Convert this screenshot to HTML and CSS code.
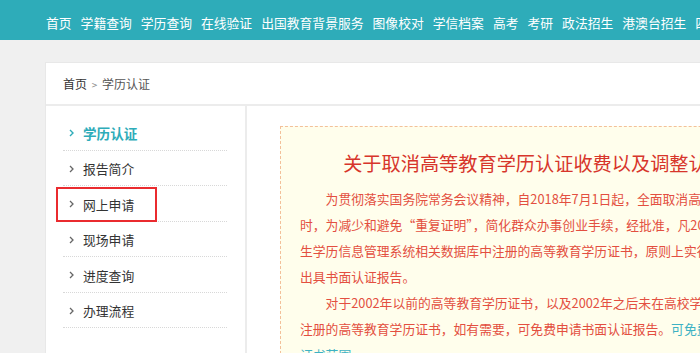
FILE: index.html
```html
<!DOCTYPE html>
<html lang="zh-CN">
<head>
  <meta charset="UTF-8">
  <meta name="viewport" content="width=device-width, initial-scale=1.0">
  <title>学历认证</title>
  <link rel="stylesheet" href="styles.css">
</head>
<body>

  <div class="topnav">
    <ul class="nav-list">
      <li><a href="#">首页</a></li>
      <li><a href="#">学籍查询</a></li>
      <li><a href="#">学历查询</a></li>
      <li><a href="#">在线验证</a></li>
      <li><a href="#">出国教育背景服务</a></li>
      <li><a href="#">图像校对</a></li>
      <li><a href="#">学信档案</a></li>
      <li><a href="#">高考</a></li>
      <li><a href="#">考研</a></li>
      <li><a href="#">政法招生</a></li>
      <li><a href="#">港澳台招生</a></li>
      <li><a href="#">四六级</a></li>
    </ul>
  </div>

  <div class="page">
    <div class="panel">
      <div class="crumb">
        <a href="#">首页</a> <span class="crumb-sep">&gt;</span> 学历认证
      </div>

      <div class="panel-body">
        <ul class="side-menu">
          <li class="active">
            <svg class="arrow" width="5" height="8" viewBox="0 0 5 8"><polyline points="1,1 4,4 1,7" fill="none" stroke="currentColor" stroke-width="1.4"/></svg>
            <a href="#">学历认证</a>
          </li>
          <li>
            <svg class="arrow" width="5" height="8" viewBox="0 0 5 8"><polyline points="1,1 4,4 1,7" fill="none" stroke="currentColor" stroke-width="1.3"/></svg>
            <a href="#">报告简介</a>
          </li>
          <li>
            <span class="mark"></span>
            <svg class="arrow" width="5" height="8" viewBox="0 0 5 8"><polyline points="1,1 4,4 1,7" fill="none" stroke="currentColor" stroke-width="1.3"/></svg>
            <a href="#">网上申请</a>
          </li>
          <li>
            <svg class="arrow" width="5" height="8" viewBox="0 0 5 8"><polyline points="1,1 4,4 1,7" fill="none" stroke="currentColor" stroke-width="1.3"/></svg>
            <a href="#">现场申请</a>
          </li>
          <li>
            <svg class="arrow" width="5" height="8" viewBox="0 0 5 8"><polyline points="1,1 4,4 1,7" fill="none" stroke="currentColor" stroke-width="1.3"/></svg>
            <a href="#">进度查询</a>
          </li>
          <li>
            <svg class="arrow" width="5" height="8" viewBox="0 0 5 8"><polyline points="1,1 4,4 1,7" fill="none" stroke="currentColor" stroke-width="1.3"/></svg>
            <a href="#">办理流程</a>
          </li>
        </ul>

        <div class="main">
          <div class="notice">
            <h2 class="notice-title">关于取消高等教育学历认证收费以及调整认证服务的公告</h2>
            <p>为贯彻落实国务院常务会议精神，自2018年7月1日起，全面取消高等教育学历认证收费。同<br>时，为减少和避免“重复证明”，简化群众办事创业手续，经批准，凡2001年以来在高等学<br>生学历信息管理系统相关数据库中注册的高等教育学历证书，原则上实行网上查询认证，不再<br>出具书面认证报告。</p>
            <p>对于2002年以前的高等教育学历证书，以及2002年之后未在高校学生学历信息管理系统中<br>注册的高等教育学历证书，如有需要，可免费申请书面认证报告。<a href="#">可免费申请书面认证报告的<br>证书范围</a></p>
          </div>
        </div>
      </div>
    </div>
  </div>

</body>
</html>
```

FILE: styles.css
```css
html {
  overflow: hidden;
}

body {
  font-family: "Microsoft YaHei", "Noto Sans CJK SC", sans-serif;
  margin: 0;
  padding: 0;
  background-color: #f0f0f0;
  color: #333;
  width: 1000px;
}

a {
  color: inherit;
  text-decoration: none;
}

ul {
  list-style: none;
  margin: 0;
  padding: 0;
}

/* top navigation */
.topnav {
  height: 40px;
  background-color: #2eacb9;
}

.nav-list {
  display: flex;
  gap: 9px;
  padding-left: 46px;
  padding-top: 2px;
  height: 38px;
  align-items: center;
  white-space: nowrap;
}

.nav-list a {
  color: #fff;
  font-size: 12.8px;
}

/* main panel */
.page {
  padding: 22px 0 0 45px;
}

.panel {
  width: 872px;
  background-color: #fff;
  border: 1px solid #e8e8e8;
  border-right: none;
}

.crumb {
  height: 41px;
  line-height: 41px;
  padding-left: 17px;
  font-size: 12px;
  color: #555;
  border-bottom: 2px solid #ececec;
}

.crumb a {
  color: #333;
}

.crumb-sep {
  font-size: 10px;
  color: #888;
  margin: 0 2px;
}

.panel-body {
  display: flex;
  min-height: 300px;
}

/* side menu */
.side-menu {
  width: 164px;
  padding: 9px 18px 0 17px;
  border-right: 2px solid #ececec;
  flex-shrink: 0;
}

.side-menu li {
  position: relative;
  display: flex;
  align-items: center;
  padding-top: 2px;
  height: 32.5px;
  border-bottom: 1px dotted #d8d8d8;
  font-size: 12.8px;
  color: #333;
}

.side-menu .arrow {
  color: #666;
  margin: 0 9px 0 6px;
}

.side-menu li.active {
  font-size: 13.6px;
  font-weight: bold;
  color: #2eacb9;
}

.side-menu li.active .arrow {
  color: #2eacb9;
}

.mark {
  position: absolute;
  left: -7px;
  top: 1px;
  width: 97px;
  height: 31px;
  border: 2px solid #ea2b2f;
}

/* notice */
.main {
  flex: 1;
  padding: 20px 0 0 33px;
}

.notice {
  width: 566px;
  padding: 0 19px 10px;
  background-color: #fffeec;
  border: 1px dashed #f3c09a;
}

.notice-title {
  margin: 21px 0 8px;
  font-size: 19.2px;
  font-weight: normal;
  line-height: 30px;
  text-align: center;
  color: #d7352b;
  white-space: nowrap;
}

.notice p {
  margin: 0;
  font-size: 12.8px;
  line-height: 26px;
  text-indent: 2em;
  color: #e34f40;
  white-space: nowrap;
}

.notice p a {
  color: #3db2c4;
}
```
